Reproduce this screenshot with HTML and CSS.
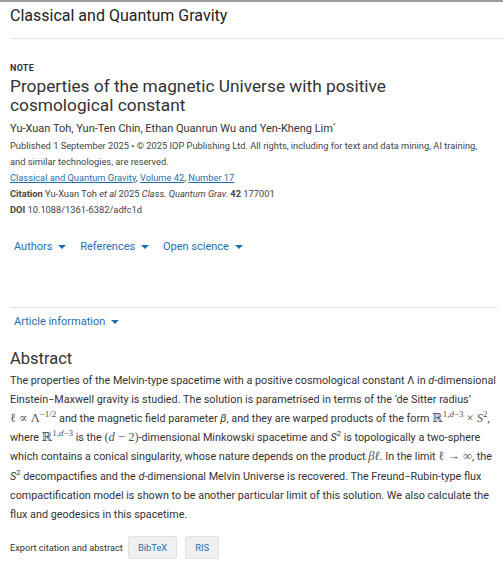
FILE: index.html
```html
<!DOCTYPE html>
<html lang="en">
<head>
  <meta charset="UTF-8" />
  <meta name="viewport" content="width=device-width, initial-scale=1.0" />
  <title>Properties of the magnetic Universe with positive cosmological constant</title>
  <link rel="stylesheet" href="styles.css">
</head>
<body>
  <header class="journal-bar">
    <div class="journal-name">Classical and Quantum Gravity</div>
  </header>

  <main class="article">
    <div class="article-type">NOTE</div>
    <h1 class="article-title">Properties of the magnetic Universe with positive cosmological constant</h1>
    <p class="authors">Yu-Xuan Toh, Yun-Ten Chin, Ethan Quanrun Wu and Yen-Kheng Lim<sup>*</sup></p>
    <p class="meta">Published 1 September 2025 &bull; &copy; 2025 IOP Publishing Ltd. All rights, including for text and data mining, AI training, and similar technologies, are reserved.</p>
    <p class="meta"><a href="#">Classical and Quantum Gravity</a>, <a href="#">Volume 42</a>, <a href="#">Number 17</a></p>
    <p class="meta"><b>Citation</b> Yu-Xuan Toh <i>et al</i> 2025 <i>Class. Quantum Grav.</i> <b>42</b> 177001</p>
    <p class="meta"><b>DOI</b> 10.1088/1361-6382/adfc1d</p>

    <nav class="tabs">
      <button class="tab">Authors <span class="caret"></span></button>
      <button class="tab">References <span class="caret"></span></button>
      <button class="tab">Open science <span class="caret"></span></button>
    </nav>

    <div class="info-bar">
      <button class="tab">Article information <span class="caret"></span></button>
    </div>

    <section class="abstract">
      <h2>Abstract</h2>
      <p>The properties of the Melvin-type spacetime with a positive cosmological constant &Lambda; in <i>d</i>-dimensional Einstein&minus;Maxwell gravity is studied. The solution is parametrised in terms of the &lsquo;de Sitter radius&rsquo; <span class="math">&#8467; &prop; &Lambda;<sup>&minus;1/2</sup></span> and the magnetic field parameter <i>&beta;</i>, and they are warped products of the form <span class="math">&#8477;<sup>1,<i>d</i>&minus;3</sup> &times; <i>S</i><sup>2</sup></span>, where <span class="math">&#8477;<sup>1,<i>d</i>&minus;3</sup></span> is the <span class="math">(<i>d</i> &minus; 2)</span>-dimensional Minkowski spacetime and <i>S</i><sup>2</sup> is topologically a two-sphere which contains a conical singularity, whose nature depends on the product <span class="math"><i>&beta;&#8467;</i></span>. In the limit <span class="math">&#8467; &rarr; &infin;</span>, the <i>S</i><sup>2</sup> decompactifies and the <i>d</i>-dimensional Melvin Universe is recovered. The Freund&minus;Rubin-type flux compactification model is shown to be another particular limit of this solution. We also calculate the flux and geodesics in this spacetime.</p>
    </section>

    <div class="export">
      <span>Export citation and abstract</span>
      <button class="export-btn">BibTeX</button>
      <button class="export-btn">RIS</button>
    </div>
  </main>
</body>
</html>
```

FILE: styles.css
```css
body {
  margin: 0;
  font-family: Roboto, "Noto Sans", sans-serif;
  color: #333;
  background: #fff;
  border-top: 2px solid #9a9a9a;
}
a {
  color: #1f6fae;
}
.journal-bar {
  margin: 0 0 0 10px;
  padding: 4px 0 13px;
  border-bottom: 1px solid #e4e4e4;
}
.journal-name {
  font-size: 16px;
  color: #222;
}
.article {
  padding: 24px 6px 0 10px;
}
.article-type {
  font-size: 9px;
  font-weight: bold;
  color: #333;
  letter-spacing: 0.3px;
}
.article-title {
  margin: 4px 0 6px;
  font-size: 17.3px;
  font-weight: normal;
  line-height: 19px;
  color: #333;
  max-width: 420px;
}
.authors {
  margin: 0 0 3px;
  font-size: 11px;
  color: #333;
}
.authors sup {
  font-size: 6px;
}
.meta {
  margin: 0;
  max-width: 478px;
  font-size: 9.3px;
  line-height: 16px;
  color: #444;
}
.tabs {
  display: flex;
  gap: 14px;
  margin: 22px 0 0 4px;
}
.tab {
  background: none;
  border: none;
  padding: 0;
  font-family: inherit;
  font-size: 11px;
  color: #1f6fae;
  cursor: pointer;
}
.caret {
  display: inline-block;
  margin-left: 3px;
  border-left: 4px solid transparent;
  border-right: 4px solid transparent;
  border-top: 4px solid #1f6fae;
  vertical-align: middle;
}
.info-bar {
  margin-top: 54px;
  border-top: 1px solid #e4e4e4;
  padding: 2px 0 0 4px;
}
.abstract h2 {
  margin: 20px 0 3px;
  font-size: 16.5px;
  font-weight: normal;
  color: #333;
}
.abstract p {
  margin: 0;
  font-size: 10.8px;
  line-height: 19.2px;
  color: #333;
}
.abstract sup {
  font-size: 7.5px;
  line-height: 0;
}
.math {
  font-family: "Liberation Serif", "DejaVu Serif", serif;
  font-size: 12.5px;
  white-space: nowrap;
  color: #555;
}
.math sup {
  font-size: 9px;
}
.export {
  display: flex;
  align-items: center;
  gap: 5px;
  margin-top: 12px;
  font-size: 9.2px;
  color: #333;
}
.export-btn {
  background: #f0f0f0;
  border: 1px solid #e2e2e2;
  border-radius: 2px;
  padding: 5px 9px;
  font-family: inherit;
  font-size: 9.4px;
  color: #1f6fae;
  cursor: pointer;
}
.export-btn + .export-btn {
  margin-left: 3px;
}
```
